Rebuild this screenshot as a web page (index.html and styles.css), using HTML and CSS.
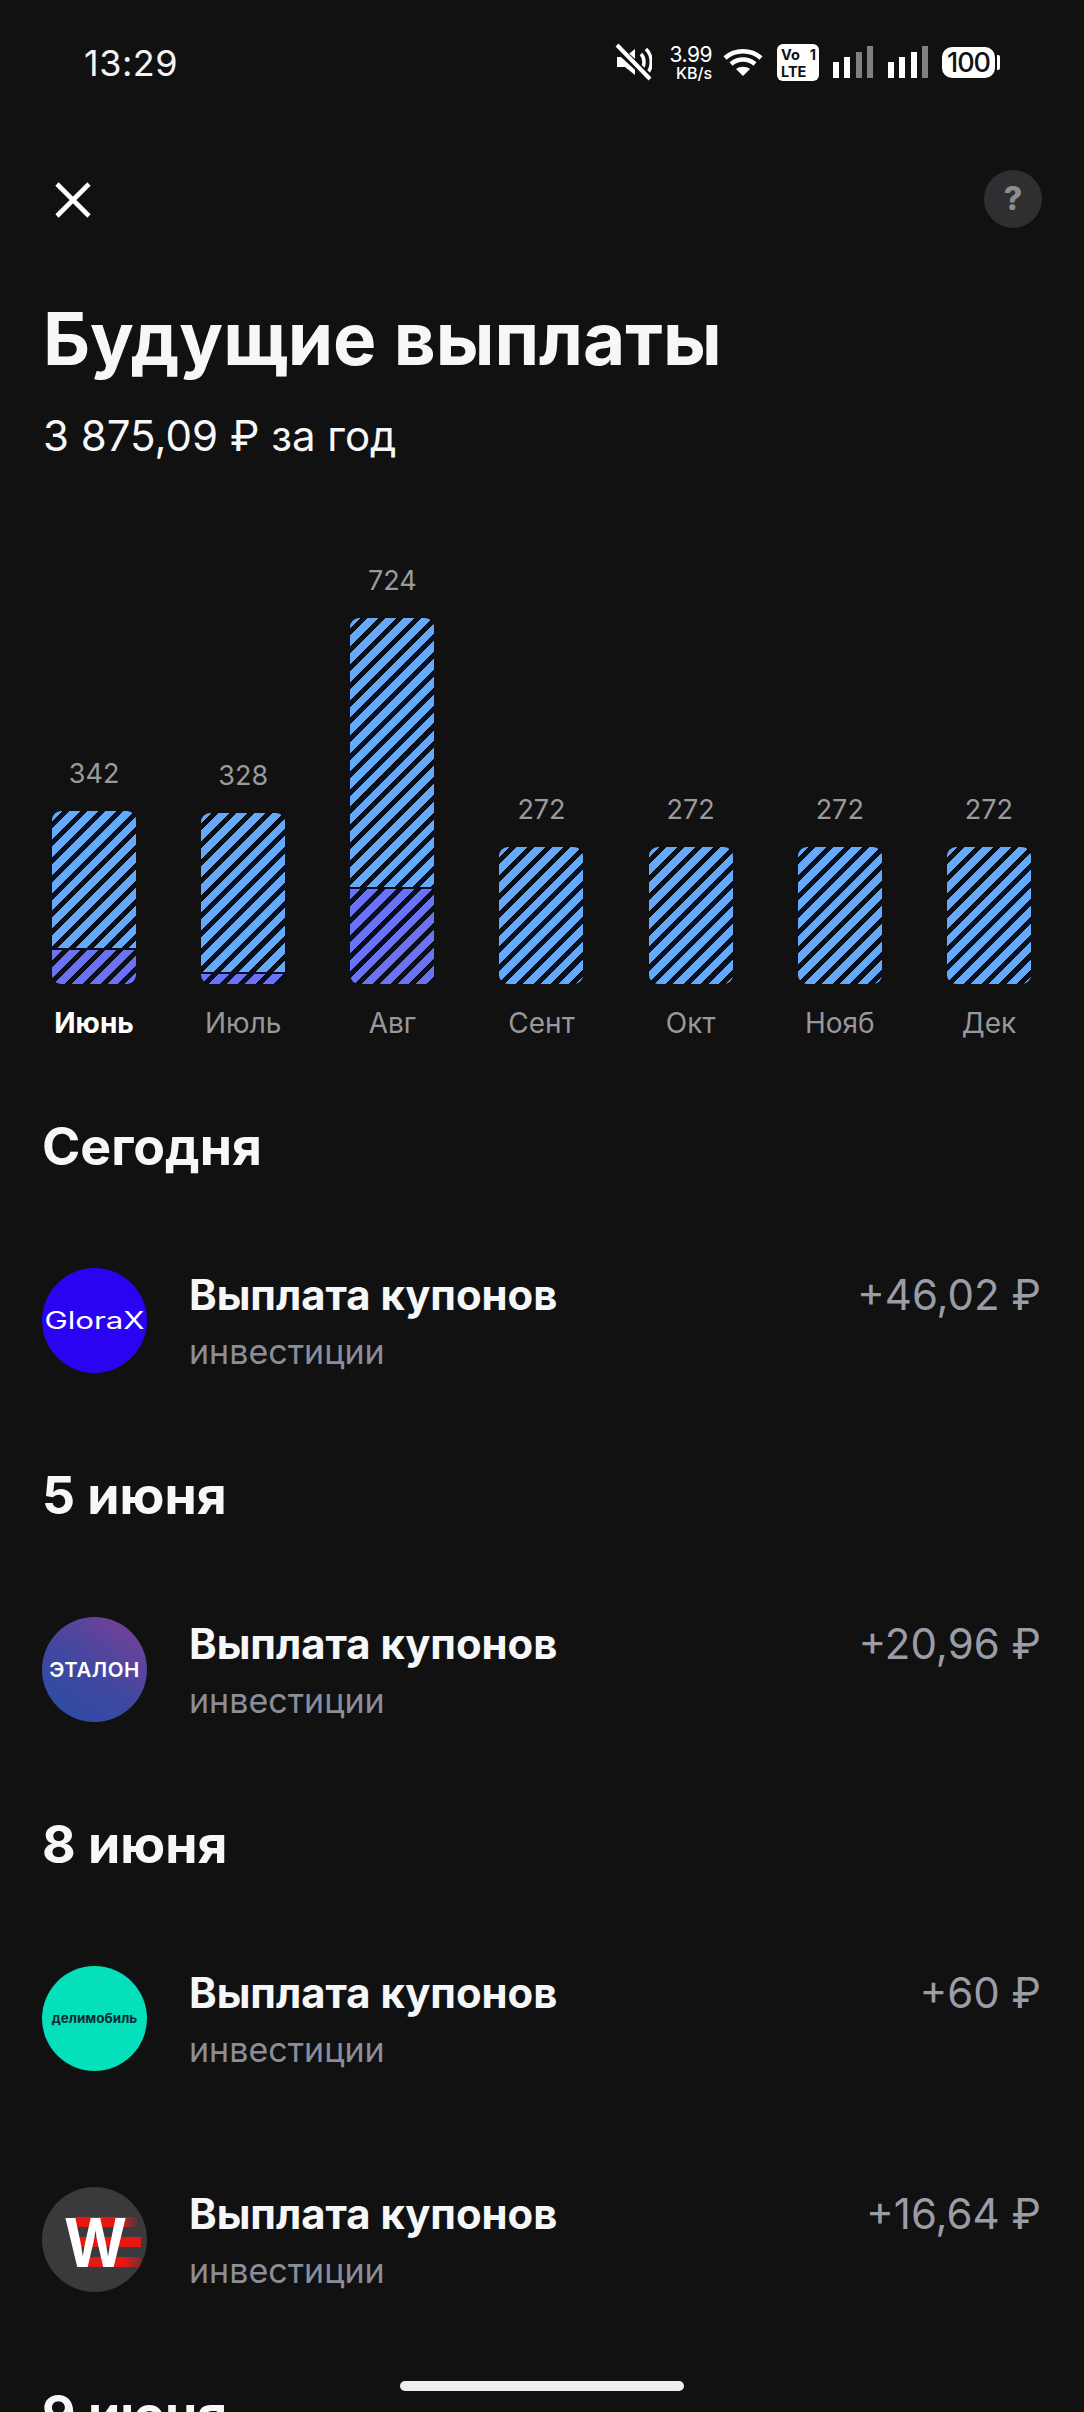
FILE: index.html
```html
<!DOCTYPE html>
<html lang="ru">
<head>
<meta charset="utf-8">
<title>Будущие выплаты</title>
<link rel="stylesheet" href="styles.css">
</head>
<body>
<div class="page">
  <div class="status">
    <span class="time">13:29</span>
    <div class="status-icons">
      <svg class="ic-mute" width="37" height="38" viewBox="0 0 37 38"><path d="M2 14h8l10-8v26l-10-8H2z" fill="#fff"/><path d="M26 11c4 4 4 12 0 16M31 6c7 7 7 19 0 26" fill="none" stroke="#fff" stroke-width="3.5"/><path d="M0 3l37 34" stroke="#111112" stroke-width="8"/><path d="M2 2l33 34" stroke="#fff" stroke-width="4"/></svg>
      <div class="speed"><span class="speed-n">3.99</span><span class="speed-u">KB/s</span></div>
      <svg class="ic-wifi" width="40" height="28" viewBox="0 0 40 28"><path d="M2 10c10-9 26-9 36 0M8 16c7-6 17-6 24 0" fill="none" stroke="#fff" stroke-width="4.5"/><path d="M13 21c4-3 10-3 14 0l-7 7z" fill="#fff"/></svg>
      <div class="volte"><span class="vo-top"><span>Vo</span><span>1</span></span><span>LTE</span></div>
      <svg class="ic-signal" width="40" height="32" viewBox="0 0 40 32"><rect x="0" y="16" width="6" height="16" fill="#fff"/><rect x="11" y="11" width="6" height="21" fill="#fff"/><rect x="23" y="6" width="6" height="26" fill="#808080"/><rect x="34" y="0" width="6" height="32" fill="#808080"/></svg>
      <svg class="ic-signal" width="40" height="32" viewBox="0 0 40 32"><rect x="0" y="16" width="6" height="16" fill="#fff"/><rect x="11" y="11" width="6" height="21" fill="#fff"/><rect x="23" y="6" width="6" height="26" fill="#fff"/><rect x="34" y="0" width="6" height="32" fill="#808080"/></svg>
      <div class="battery"><span class="battery-body">100</span><span class="battery-nub"></span></div>
    </div>
  </div>

  <div class="topbar">
    <svg class="close" width="38" height="38" viewBox="0 0 38 38"><path d="M3 3l32 32M35 3L3 35" stroke="#fff" stroke-width="4.6" fill="none"/></svg>
    <span class="help">?</span>
  </div>

  <h1 class="title">Будущие выплаты</h1>
  <p class="subtitle">3 875,09 ₽ за год</p>

  <div class="chart">
    <div class="col"><span class="val">342</span><div class="bar"><div class="seg seg-blue"></div><div class="seg seg-violet" style="height:34px"></div></div><span class="month month-active">Июнь</span></div>
    <div class="col"><span class="val">328</span><div class="bar"><div class="seg seg-blue"></div><div class="seg seg-violet" style="height:10px"></div></div><span class="month">Июль</span></div>
    <div class="col"><span class="val">724</span><div class="bar"><div class="seg seg-blue"></div><div class="seg seg-violet" style="height:95px"></div></div><span class="month">Авг</span></div>
    <div class="col"><span class="val">272</span><div class="bar"><div class="seg seg-blue" style="height:137px"></div></div><span class="month">Сент</span></div>
    <div class="col"><span class="val">272</span><div class="bar"><div class="seg seg-blue" style="height:137px"></div></div><span class="month">Окт</span></div>
    <div class="col"><span class="val">272</span><div class="bar"><div class="seg seg-blue" style="height:137px"></div></div><span class="month">Нояб</span></div>
    <div class="col"><span class="val">272</span><div class="bar"><div class="seg seg-blue" style="height:137px"></div></div><span class="month">Дек</span></div>
  </div>

  <div class="list">
    <h2 class="day">Сегодня</h2>
    <div class="row">
      <div class="avatar av-glorax"><span class="logo-glorax">GloraX</span></div>
      <div class="row-text"><span class="row-title">Выплата купонов</span><span class="row-sub">инвестиции</span></div>
      <span class="amount">+46,02 ₽</span>
    </div>
    <h2 class="day">5 июня</h2>
    <div class="row">
      <div class="avatar av-etalon"><span class="logo-etalon">ЭТАЛОН</span></div>
      <div class="row-text"><span class="row-title">Выплата купонов</span><span class="row-sub">инвестиции</span></div>
      <span class="amount">+20,96 ₽</span>
    </div>
    <h2 class="day">8 июня</h2>
    <div class="row">
      <div class="avatar av-deli"><span class="logo-deli">делимобиль</span></div>
      <div class="row-text"><span class="row-title">Выплата купонов</span><span class="row-sub">инвестиции</span></div>
      <span class="amount">+60 ₽</span>
    </div>
    <div class="row">
      <div class="avatar av-w">
        <svg width="105" height="105" viewBox="0 0 105 105">
          <defs>
            <linearGradient id="fadeA" x1="0" x2="1" y1="0" y2="0"><stop offset="0.72" stop-color="#e8170f"/><stop offset="1" stop-color="#e8170f" stop-opacity="0.1"/></linearGradient>
            <linearGradient id="fadeB" x1="0" x2="1" y1="0" y2="0"><stop offset="0.72" stop-color="#e8170f"/><stop offset="1" stop-color="#e8170f" stop-opacity="0.35"/></linearGradient>
          </defs>
          <rect x="33" y="30" width="62" height="10" fill="url(#fadeA)"/>
          <rect x="36" y="50" width="63" height="10" fill="#e8170f"/>
          <rect x="36" y="70" width="63" height="10" fill="url(#fadeB)"/>
          <text class="logo-w" x="22" y="80" textLength="63" lengthAdjust="spacingAndGlyphs">W</text>
        </svg>
      </div>
      <div class="row-text"><span class="row-title">Выплата купонов</span><span class="row-sub">инвестиции</span></div>
      <span class="amount">+16,64 ₽</span>
    </div>
    <h2 class="day">9 июня</h2>
  </div>

  <div class="home-indicator"></div>
</div>
</body>
</html>
```

FILE: styles.css
```css
* { box-sizing: border-box; }
html, body { margin: 0; padding: 0; background: #111112; }
body { font-family: Inter, "Noto Sans", sans-serif; color: #f6f7f8; }
.page { position: relative; width: 1084px; height: 2412px; overflow: hidden; background: #111112; }

.status { height: 124px; display: flex; align-items: center; padding: 0 84px; }
.time { font-size: 36px; color: #f4f4f4; letter-spacing: 0.5px; padding-top: 2px; }
.status-icons { margin-left: auto; margin-right: -84px; padding-right: 84px; display: flex; align-items: center; }
.ic-mute { margin-right: 17px; }
.speed { display: flex; flex-direction: column; align-items: flex-end; width: 43px; margin-right: 11px; color: #fff; line-height: 1; }
.speed-n { font-size: 21px; height: 21px; letter-spacing: -0.5px; }
.speed-u { font-size: 16px; font-weight: 500; height: 15px; }
.ic-wifi { margin-right: 14px; }
.volte { width: 42px; height: 37px; border-radius: 6px; background: #fff; color: #111112; font-size: 14.5px; font-weight: 700; line-height: 17px; padding: 2px 3px 0 4px; display: flex; flex-direction: column; margin-right: 14px; }
.vo-top { display: flex; justify-content: space-between; }
.ic-signal { margin-right: 15px; }
.ic-signal + .ic-signal { margin-right: 14px; }
.battery { display: flex; align-items: center; }
.battery-body { width: 53px; height: 31px; border-radius: 10px; background: #fff; color: #111112; font-size: 27px; font-weight: 500; line-height: 31px; text-align: center; letter-spacing: -1px; }
.battery-nub { width: 3px; height: 15px; margin-left: 2px; background: #fff; border-radius: 0 2px 2px 0; }

.topbar { margin-top: 46px; height: 58px; padding: 0 42px 0 54px; display: flex; align-items: center; justify-content: space-between; }
.close { margin-top: 2px; }
.help { width: 58px; height: 58px; border-radius: 50%; background: #2f2f31; color: #8d8d8f; font-size: 32px; font-weight: 800; line-height: 58px; text-align: center; }

.title { margin: 66px 0 0 43px; font-size: 72.8px; font-weight: 700; line-height: 90px; letter-spacing: 0; }
.subtitle { margin: 22px 0 0 43px; font-size: 42px; font-weight: 400; line-height: 60px; }

.chart { margin-top: 95px; padding-left: 19.5px; display: flex; align-items: flex-end; }
.col { width: 149.15px; display: flex; flex-direction: column; align-items: center; }
.val { font-size: 27px; line-height: 40px; color: #9a9a9c; margin-bottom: 17px; }
.bar { width: 84px; border-radius: 9px; overflow: hidden; display: flex; flex-direction: column; background: #0a0e18; }
.col:nth-child(1) .bar { height: 173px; }
.col:nth-child(2) .bar { height: 171px; }
.col:nth-child(3) .bar { height: 366px; }
.seg { flex: 1 1 auto; }
.seg-blue { background: repeating-linear-gradient(135deg, #65a9fb 0, #65a9fb 7.6px, #0a0e18 7.6px, #0a0e18 12.6px); }
.seg-violet { flex: 0 0 auto; margin-top: 2px; background: repeating-linear-gradient(135deg, #6a73f5 0, #6a73f5 7.6px, #0a0e18 7.6px, #0a0e18 12.6px); }
.month { font-size: 28px; line-height: 78px; color: #98989c; }
.month-active { color: #fff; font-weight: 700; }

.list { margin-top: 20px; padding: 0 43px 0 42px; }
.day { margin: 0; padding-top: 1px; height: 128px; font-size: 51.8px; font-weight: 700; line-height: 127px; }
.row { height: 221px; padding-top: 58px; display: flex; align-items: flex-start; }
.avatar { width: 105px; height: 105px; border-radius: 50%; flex: none; display: flex; align-items: center; justify-content: center; overflow: hidden; }
.av-glorax { background: #2a04f2; }
.av-etalon { background: linear-gradient(215deg, #7d3f98 0%, #3f48a0 55%, #2a4ca6 100%); }
.av-deli { background: #04e0bb; }
.av-w { background: #3a3a3c; }
.logo-glorax { color: #fff; font-size: 24px; font-weight: 400; transform: scaleX(1.3); }
.logo-etalon { color: #fff; font-size: 20.5px; font-weight: 600; letter-spacing: 0.5px; }
.logo-deli { color: #0c2c33; font-size: 13.5px; font-weight: 700; margin-top: -2px; }
.logo-w { font-family: Inter, sans-serif; font-size: 68px; font-weight: 700; fill: #fff; }
.row-text { margin: 1px 0 0 42px; display: flex; flex-direction: column; gap: 5px; }
.row-title { font-size: 41.8px; font-weight: 700; line-height: 52px; }
.row-sub { font-size: 34px; line-height: 52px; color: #8b8e97; }
.amount { margin-left: auto; margin-top: 1px; font-size: 42px; line-height: 52px; color: #9a9ca6; }

.home-indicator { position: absolute; left: 400px; top: 2381px; width: 284px; height: 10px; border-radius: 5px; background: #eeeeee; }
```
